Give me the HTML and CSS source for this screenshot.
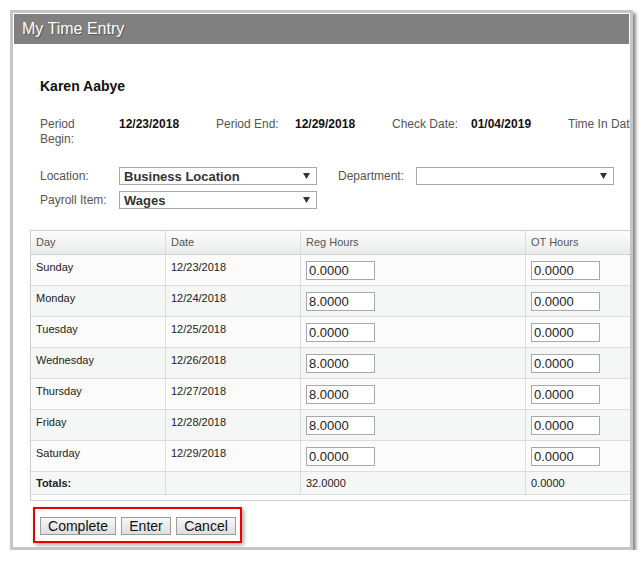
FILE: index.html
```html
<!DOCTYPE html>
<html lang="en">
<head>
  <meta charset="UTF-8">
  <title>My Time Entry</title>
  <link rel="stylesheet" href="styles.css">
</head>
<body>
  <div class="window">
    <div class="titlebar">My Time Entry</div>

    <div class="panel">
      <h2 class="emp-name">Karen Aabye</h2>

      <div class="period">
        <span class="lbl">Period Begin:</span><span class="val">12/23/2018</span>
        <span class="lbl">Period End:</span><span class="val">12/29/2018</span>
        <span class="lbl">Check Date:</span><span class="val">01/04/2019</span>
        <span class="lbl nowrap">Time In Date:</span>
      </div>

      <div class="filters">
        <div class="filter-row">
          <span class="lbl">Location:</span>
          <div class="select"><span>Business Location</span><svg width="7" height="6" viewBox="0 0 7 6"><polygon points="0,0 7,0 3.5,6" fill="#333"/></svg></div>
          <span class="lbl lbl-dept">Department:</span>
          <div class="select"><span></span><svg width="7" height="6" viewBox="0 0 7 6"><polygon points="0,0 7,0 3.5,6" fill="#333"/></svg></div>
        </div>
        <div class="filter-row">
          <span class="lbl">Payroll Item:</span>
          <div class="select"><span>Wages</span><svg width="7" height="6" viewBox="0 0 7 6"><polygon points="0,0 7,0 3.5,6" fill="#333"/></svg></div>
        </div>
      </div>
    </div>

    <div class="grid-wrap">
      <table class="grid">
        <colgroup>
          <col class="c-day"><col class="c-date"><col class="c-hours"><col class="c-hours">
        </colgroup>
        <thead>
          <tr><th>Day</th><th>Date</th><th>Reg Hours</th><th>OT Hours</th></tr>
        </thead>
        <tbody>
          <tr><td>Sunday</td><td>12/23/2018</td><td><input type="text" value="0.0000"></td><td><input type="text" value="0.0000"></td></tr>
          <tr><td>Monday</td><td>12/24/2018</td><td><input type="text" value="8.0000"></td><td><input type="text" value="0.0000"></td></tr>
          <tr><td>Tuesday</td><td>12/25/2018</td><td><input type="text" value="0.0000"></td><td><input type="text" value="0.0000"></td></tr>
          <tr><td>Wednesday</td><td>12/26/2018</td><td><input type="text" value="8.0000"></td><td><input type="text" value="0.0000"></td></tr>
          <tr><td>Thursday</td><td>12/27/2018</td><td><input type="text" value="8.0000"></td><td><input type="text" value="0.0000"></td></tr>
          <tr><td>Friday</td><td>12/28/2018</td><td><input type="text" value="8.0000"></td><td><input type="text" value="0.0000"></td></tr>
          <tr><td>Saturday</td><td>12/29/2018</td><td><input type="text" value="0.0000"></td><td><input type="text" value="0.0000"></td></tr>
          <tr class="totals"><td><b>Totals:</b></td><td></td><td>32.0000</td><td>0.0000</td></tr>
        </tbody>
      </table>
    </div>

    <div class="actions">
      <button class="btn btn-complete">Complete</button>
      <button class="btn btn-enter">Enter</button>
      <button class="btn btn-cancel">Cancel</button>
    </div>
  </div>
</body>
</html>
```

FILE: styles.css
```css
body{ margin: 0; background: #fff; font-family: "Liberation Sans", Arial, sans-serif; color: #333;}

.window{ margin: 10px 0 0 10px; width: 615px; height: 532px; padding: 1px; border: 3px solid #c6c6c6;
  background: #fff; overflow: hidden; box-shadow: 3px 3px 3px rgba(0,0,0,0.45);}

.titlebar{ height: 30px; line-height: 30px; padding-left: 8px; background: #808080; color: #fff; font-size: 16px;
  text-shadow: 1px 1px 1px rgba(0,0,0,0.35);}

.panel{ padding-left: 26px;}
.emp-name{ margin: 34px 0 0; font-size: 14px; line-height: 17px; color: #111;}

.period{ display: flex; margin-top: 22px; font-size: 12px; line-height: 15px; white-space: nowrap;}
.period span{ flex-shrink: 0;}
.period .lbl{ width: 70px; margin-right: 9px; white-space: normal; color: #555;}
.period .val{ width: 97px; font-weight: bold; color: #111;}
.period .nowrap{ white-space: nowrap; width: auto;}

.filters{ margin-top: 20px; display: flex; flex-direction: column; gap: 6px;}
.filter-row{ display: flex; align-items: center; font-size: 12px;}
.filter-row > *{ flex-shrink: 0;}
.filter-row .lbl{ width: 79px; color: #555;}
.filter-row .lbl-dept{ width: 78px; margin-left: 21px;}
.select{ width: 198px; height: 18px; box-sizing: border-box; border: 1px solid #a9a9a9; background: #fff;
  display: flex; align-items: center; justify-content: space-between; padding: 0 6px 0 4px;}
.select span{ font-size: 13px; font-weight: bold; color: #333;}

.grid-wrap{ margin: 21px 0 0 16px; width: 722px; border: 1px solid #cfcfcf; padding-bottom: 5px;}
.grid{ border-collapse: separate; border-spacing: 0; table-layout: fixed; width: 720px; font-size: 11px;}
.c-day, .c-date{ width: 135px;}
.c-hours{ width: 225px;}
.grid th{ height: 23px; padding: 0 5px; text-align: left; font-weight: normal; color: #555; line-height: 23px;
  background: linear-gradient(#fdfdfd, #e9eaea); border-right: 1px solid #dcdcdc; border-bottom: 1px solid #d2d2d2;}
.grid td{ height: 31px; box-sizing: border-box; padding: 6px 5px 0; vertical-align: top; line-height: 13px; color: #222;
  border-right: 1px solid #dcdcdc; border-bottom: 1px solid #dcdcdc; background: #fbfbfb;}
.grid tbody tr:nth-child(even) td{ background: #f5f6f6;}
.grid .totals td{ height: 23px; padding-top: 5px; background: #f6f7f7;}
.grid input{ width: 69px; height: 19px; box-sizing: border-box; margin: 0; padding: 0 2px; border: 1px solid #a9a9a9;
  font-family: "Liberation Sans", Arial, sans-serif; font-size: 13px; color: #222; background: #fff;}

.actions{ display: inline-flex; gap: 5px; margin: 6px 0 0 19px; padding: 8px 4px 6px 5px; border: 2px solid #e60000;
  box-shadow: 2px 2px 4px rgba(0,0,0,0.35);}
.btn{ height: 18px; padding: 0; border: 1px solid #9c9c9c; background: linear-gradient(#f7f7f7, #dedede);
  font-family: "Liberation Sans", Arial, sans-serif; font-size: 14px; line-height: 16px; color: #111;}
.btn-complete{ width: 76px;}
.btn-enter{ width: 50px;}
.btn-cancel{ width: 60px;}
```
